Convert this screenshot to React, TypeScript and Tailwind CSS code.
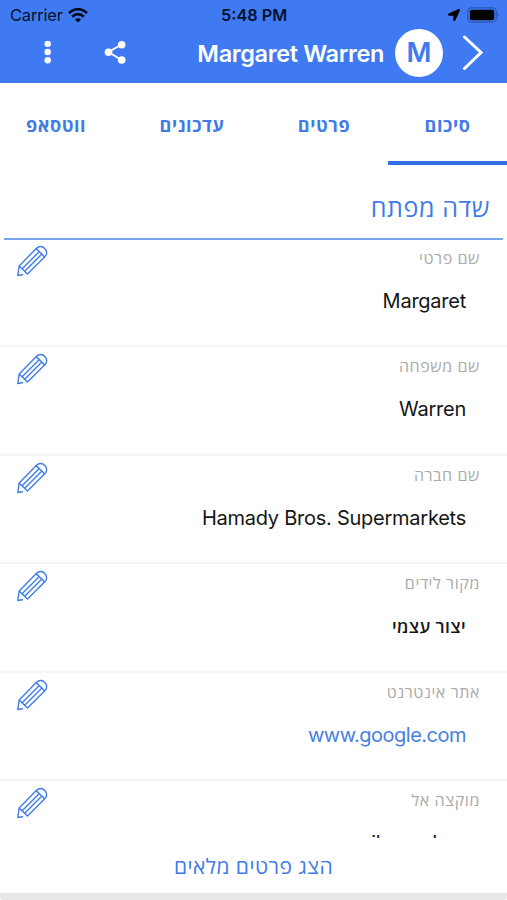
import { FaLocationArrow } from "react-icons/fa";

const TABS = [
  { label: "ווטסאפ", width: "w-[112px]" },
  { label: "עדכונים", width: "w-[160px]" },
  { label: "פרטים", width: "w-[104px]" },
  { label: "סיכום", width: "w-[119px]" },
];

const FIELDS = [
  { label: "שם פרטי", value: "Margaret" },
  { label: "שם משפחה", value: "Warren" },
  { label: "שם חברה", value: "Hamady Bros. Supermarkets" },
  { label: "מקור לידים", value: "יצור עצמי", hebrew: true },
  { label: "אתר אינטרנט", value: "www.google.com", link: true },
  { label: "מוקצה אל", value: "milosanders" },
];

function WifiIcon() {
  return (
    <svg width="20" height="15" viewBox="0 0 20 15" fill="none" stroke="#020b1e" strokeWidth="2.7">
      <path d="M1 5.2C6-.2 14-.2 19 5.2" />
      <path d="M4.2 8.7c3.3-3.4 8.3-3.4 11.6 0" />
      <path d="M10 14.6 6.9 11.5c1.7-1.7 4.5-1.7 6.2 0Z" fill="#020b1e" stroke="none" />
    </svg>
  );
}

function BatteryIcon() {
  return (
    <svg width="33" height="16" viewBox="0 0 33 16">
      <rect x=".8" y=".8" width="28.4" height="14.4" rx="4.2" fill="none" stroke="#2a55b4" strokeWidth="1.3" />
      <rect x="2.8" y="2.8" width="24.4" height="10.4" rx="2.3" fill="#000" />
      <path d="M30.5 5.8c1.5.6 1.5 3.8 0 4.4Z" fill="#2a55b4" />
    </svg>
  );
}

function MoreIcon() {
  return (
    <svg className="ml-[44px] shrink-0" width="8" height="24" viewBox="0 0 8 24" fill="#fff">
      <circle cx="3.7" cy="2.8" r="3.2" />
      <circle cx="3.7" cy="11" r="3.2" />
      <circle cx="3.7" cy="19.2" r="3.2" />
    </svg>
  );
}

function ShareIcon() {
  return (
    <svg className="ml-[52px] shrink-0" width="24" height="24" viewBox="0 0 24 24" fill="#fff">
      <path d="M17.5 3.500 4.500 11l13 8" fill="none" stroke="#fff" strokeWidth="1.9" />
      <circle cx="17.700" cy="3.800" r="3.800" />
      <circle cx="4.500" cy="11.200" r="3.800" />
      <circle cx="17.700" cy="19" r="3.800" />
    </svg>
  );
}

function PencilIcon() {
  return (
    <svg
      width="32"
      height="32"
      viewBox="0 0 32 32"
      fill="none"
      stroke="#3f7de8"
      strokeWidth="1.4"
      strokeLinejoin="round"
      strokeLinecap="round"
    >
      <path d="M6.5 29.8 1.8 30.5 3.2 20.9 20.3 3.5c3-3 6.2-2.4 8.500 0 2.300 2.300 2.700 5.600 0 8.200L11.500 29 3.200 20.900" />
      <path d="M20 3.900c1.800 1 2.800 2 4 3.500 1.800 1.300 3.200 2.700 4.300 4.700M22.600 7.300 6.200 23.700M24.900 9.900 8.700 26.200" />
    </svg>
  );
}

function Header() {
  return (
    <header className="h-[83px] bg-[#3f7af3]">
      {/* Status bar */}
      <div className="flex h-[30px] items-center text-[#06122c]">
        <span className="w-[58px] pl-[10px] text-[16.5px] tracking-[-0.2px]">Carrier</span>
        <span className="ml-[10px] w-[153px]"><WifiIcon /></span>
        <span className="w-[227px] whitespace-nowrap text-[16.3px] font-semibold">5:48 PM</span>
        <FaLocationArrow className="h-[12px] w-[12px] text-black" />
        <span className="ml-[7px]"><BatteryIcon /></span>
      </div>

      {/* Title bar */}
      <div className="flex h-[46px] items-center text-white">
        <MoreIcon />
        <ShareIcon />
        <h1 className="ml-auto whitespace-nowrap pt-[2px] text-[23.5px] font-semibold leading-none tracking-[-0.35px]">Margaret Warren</h1>
        <div className="ml-[11px] flex size-[48px] shrink-0 items-center justify-center rounded-full bg-white text-[27px] font-semibold text-[#3f7af3]">
          M
        </div>
        <svg className="ml-[19px] mr-[23px] shrink-0" width="22" height="36" viewBox="0 0 22 36" fill="none" stroke="#fff" strokeWidth="3" strokeLinecap="round">
          <path d="M2.5 2 19 17.5 2.5 33.5" />
        </svg>
      </div>
    </header>
  );
}

export default function App() {
  return (
    <div className="flex h-[900px] w-[507px] flex-col overflow-hidden bg-white font-[Inter,'Open_Sans',sans-serif]">
      <Header />

      <nav className="flex h-[82px] font-['Open_Sans',sans-serif]">
        {TABS.map((tab, i) => (
          <div
            key={tab.label}
            dir="rtl"
            className={`flex shrink-0 justify-center pt-[28px] text-[18px] font-bold leading-[28px] tracking-[0.6px] text-[#3f7be8] ${tab.width} ${
              i === TABS.length - 1 ? "ml-auto border-b-4 border-[#2f6ee3]" : ""
            }`}
          >
            {tab.label}
          </div>
        ))}
      </nav>

      <h2
        dir="rtl"
        className="mx-[4px] h-[75px] shrink-0 border-b-2 border-[#78a4ec] pr-[13px] pt-[24px] font-['Open_Sans',sans-serif] text-[25px] leading-[36px] tracking-[0.6px] text-[#3f7be8]"
      >
        שדה מפתח
      </h2>

      <main className="h-[599px] overflow-hidden">
        {FIELDS.map((field) => (
          <div
            key={field.label}
            className="flex h-[108.5px] justify-between border-b-2 border-[#f5f5f5] pl-[16px] pr-[27px] pt-px first:h-[107px] first:pt-0"
          >
            <div className="pt-[5px]"><PencilIcon /></div>
            <div className="text-right">
              <div dir="rtl" className="pt-[6px] font-['Open_Sans',sans-serif] text-[16px] leading-[24px] tracking-[0.6px] text-[#aaa]">
                {field.label}
              </div>
              <div
                dir={field.hebrew ? "rtl" : "ltr"}
                className={`mr-[14px] mt-[16px] whitespace-nowrap leading-[30px] ${
                  field.hebrew
                    ? "font-['Open_Sans',sans-serif] text-[17.5px] font-semibold tracking-[0.4px]"
                    : field.link
                      ? "text-[20px] tracking-[-0.5px]"
                      : "text-[20px] tracking-[-0.25px]"
                } ${field.link ? "text-[#477fe2]" : "text-[#151515]"}`}
              >
                {field.value}
              </div>
            </div>
          </div>
        ))}
      </main>

      {/* Footer overlaps the last row by a pixel */}
      <button dir="rtl" className="relative -mt-px h-[55px] shrink-0 bg-white pt-[2px] font-['Open_Sans',sans-serif] text-[21px] tracking-[0.45px] text-[#3f7be8]">
        הצג פרטים מלאים
      </button>
      <div className="h-[7px] shrink-0 rounded-b-[3px] bg-[#e8e8e8]" />
    </div>
  );
}
